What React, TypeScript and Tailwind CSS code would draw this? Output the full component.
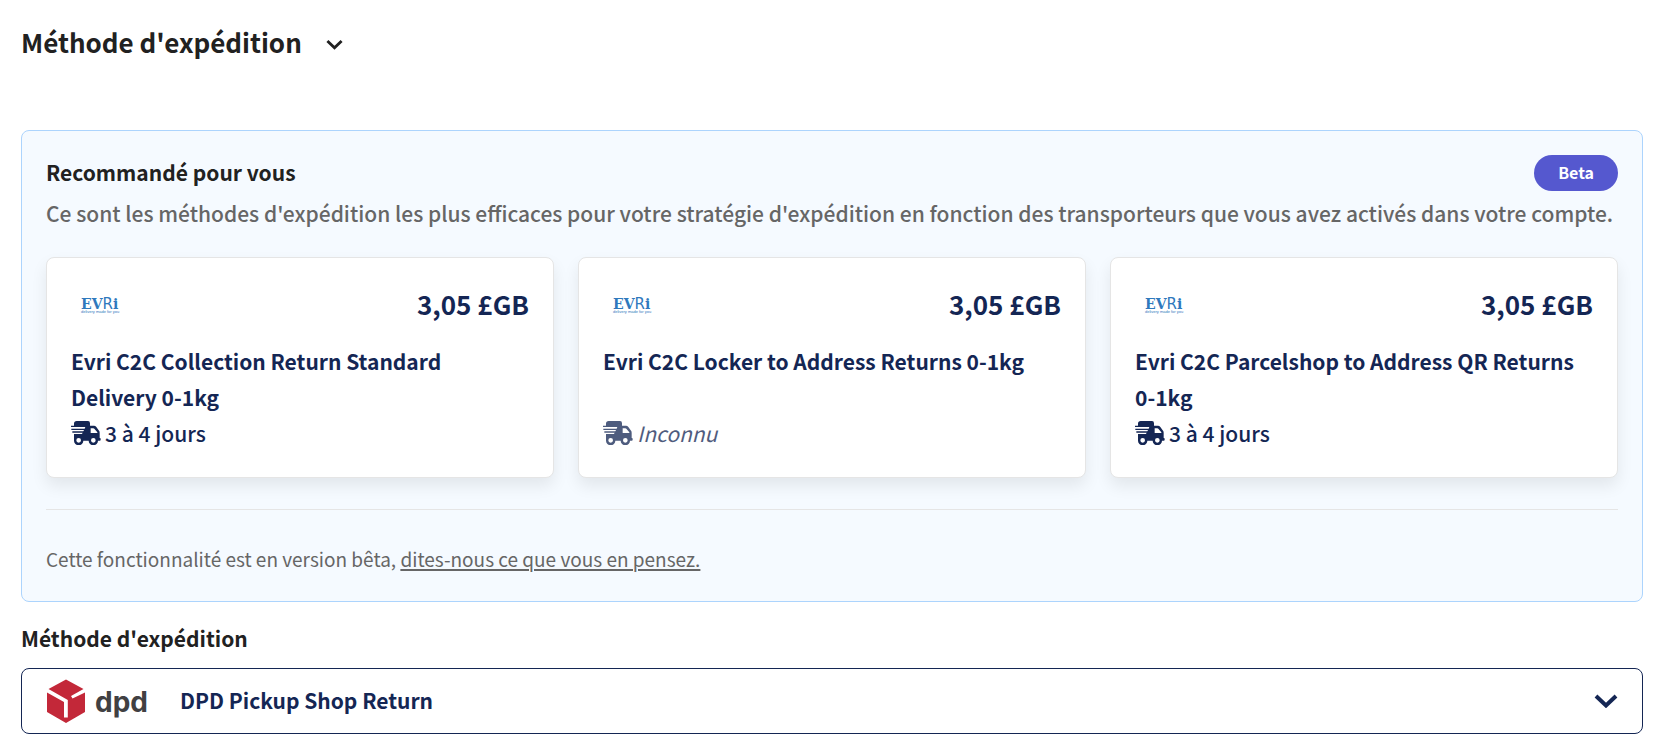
import React from "react";

type Method = {
  name: string;
  price: string;
  duration: string | null;
};

const methods: Method[] = [
  { name: "Evri C2C Collection Return Standard Delivery 0-1kg", price: "3,05 £GB", duration: "3 à 4 jours" },
  { name: "Evri C2C Locker to Address Returns 0-1kg", price: "3,05 £GB", duration: null },
  { name: "Evri C2C Parcelshop to Address QR Returns 0-1kg", price: "3,05 £GB", duration: "3 à 4 jours" },
];

function Chevron({ className, strokeWidth }: { className: string; strokeWidth: number }) {
  return (
    <svg className={className} viewBox="0 0 24 14" fill="none" aria-hidden="true">
      <path d="M2 2 L12 11.5 L22 2" stroke="currentColor" strokeWidth={strokeWidth} strokeLinejoin="miter" />
    </svg>
  );
}

function TruckIcon() {
  return (
    <svg className="h-6 w-[30px] shrink-0" viewBox="0 0 90 72" aria-hidden="true">
      <path
        fill="currentColor"
        fillRule="evenodd"
        d="M9 14 V8 Q9 0 17 0 H51 Q57 0 57 7 V14 H69 Q73 14 76 18 L83 28 Q86 31 86 35 V51 H87 Q89 51 89 54 V56 Q89 59 86 59 H81 A14 14 0 0 1 53 59 H37 A14 14 0 0 1 9 59 V39 H33 L35 35 H4 V31 H37 L39 27 H1 V23 H41 L43 18 H0 V14 Z M59 22 V36 H79 V34 L70 23 Q69 22 67 22 Z M23 51 A7 7 0 1 0 23 65 A7 7 0 1 0 23 51 Z M67 51 A7 7 0 1 0 67 65 A7 7 0 1 0 67 51 Z"
      />
    </svg>
  );
}

function EvriLogo() {
  return (
    <svg className="h-12 w-[58px]" viewBox="0 0 58 48" role="img" aria-label="Evri" fill="#2f79bd">
      <text x="10" y="29" fontFamily="DejaVu Serif" fontSize="14" fontWeight="700">
        EV<tspan fontFamily="DejaVu Sans" fontSize="15" fontWeight="400">R</tspan>i
      </text>
      <text x="10" y="33" fontFamily="Liberation Sans" fontSize="4">
        delivery made for you
      </text>
    </svg>
  );
}

function DpdLogo() {
  return (
    <svg className="h-11 w-[102px]" viewBox="0 0 102 44" role="img" aria-label="DPD">
      <path fill="#c32839" d="M20 0.500 L37.500 10 L25 17 L26.500 19.500 L39 13.500 V33 L20 44 L1 33 V13.500 L18 23 V38.500 H21.800 V21 L2.500 10 Z" />
      <text x="49" y="33" fontFamily="Inter" fontSize="28" fontWeight="700" fill="#414042">
        dpd
      </text>
    </svg>
  );
}

function MethodCard({ method }: { method: Method }) {
  return (
    <button
      type="button"
      className="flex flex-col rounded-lg border border-[#e5e5e5] bg-white px-6 pt-[22px] pb-[26px] text-left text-[#142654] shadow-[0_8px_16px_rgba(0,0,0,0.08)]"
    >
      <span className="mb-[15px] flex h-12 w-full items-center justify-between">
        <EvriLogo />
        <span className="text-[26px] leading-9 font-bold">{method.price}</span>
      </span>
      <span className="min-h-[72px] font-bold">{method.name}</span>
      <span className={method.duration ? "flex items-center gap-1" : "flex items-center gap-1 opacity-75"}>
        <TruckIcon />
        {method.duration ? <span>{method.duration}</span> : <em className="font-normal">Inconnu</em>}
      </span>
    </button>
  );
}

export default function App() {
  return (
    <main className="bg-white pt-6 pr-[27px] pb-3 pl-[21px] font-['Noto_Sans_CJK_JP',sans-serif] text-[21px] leading-9 font-medium text-[#212121]">
      <h1 className="mb-[70px]">
        <button type="button" className="flex items-center gap-6 text-[26px] leading-9 font-bold">
          Méthode d'expédition
          <Chevron className="mt-1 h-[11px] w-[17px]" strokeWidth={4} />
        </button>
      </h1>

      <section className="rounded-lg border border-[#acd4fd] bg-[#f5faff] p-6">
        <div className="flex items-start justify-between">
          <h2 className="leading-[34px] font-bold">Recommandé pour vous</h2>
          <span className="rounded-full bg-[#5558cf] px-6 pb-[2px] text-base leading-[34px] font-bold text-white">Beta</span>
        </div>
        <p className="mt-1 text-[#666666]">
          Ce sont les méthodes d'expédition les plus efficaces pour votre stratégie d'expédition en fonction des
          transporteurs que vous avez activés dans votre compte.
        </p>
        <div className="mt-[26px] grid grid-cols-3 gap-6">
          {methods.map((method) => (
            <MethodCard key={method.name} method={method} />
          ))}
        </div>
        <hr className="mt-[31px] mb-[31px] border-[#e5e5e5]" />
        <p className="text-[19px] font-normal text-[#666666]">
          Cette fonctionnalité est en version bêta,{" "}
          <a href="#feedback" className="underline decoration-2 underline-offset-2">
            dites-nous ce que vous en pensez.
          </a>
        </p>
      </section>

      <h2 id="method-label" className="mt-[18px] mb-3 font-bold">
        Méthode d'expédition
      </h2>
      <button
        type="button"
        aria-labelledby="method-label method-value"
        aria-haspopup="listbox"
        className="flex h-[66px] w-full items-center rounded-lg border border-[#142654] bg-white px-6 text-[#142654]"
      >
        <DpdLogo />
        <span id="method-value" className="ml-8 flex-1 pb-[2px] text-left leading-[34px] font-bold">
          DPD Pickup Shop Return
        </span>
        <Chevron className="h-[14px] w-6" strokeWidth={4} />
      </button>
    </main>
  );
}
